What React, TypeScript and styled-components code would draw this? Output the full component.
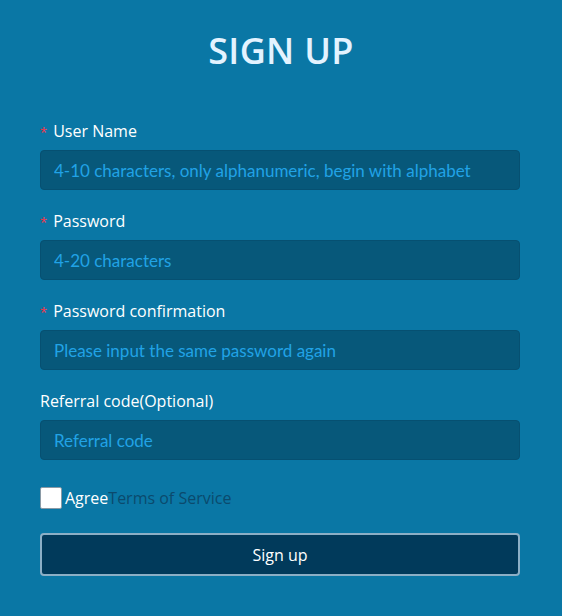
import React from "react";
import styled, { createGlobalStyle } from "styled-components";

const Global = createGlobalStyle`
  html, body { margin: 0; padding: 0; background: #0a77a5; }
  body { font-family: "Open Sans", "Noto Sans", sans-serif; }
  * { box-sizing: border-box; }
`;

const Page = styled.div`
  width: 562px;
  min-height: 616px;
  background: #0a77a5;
  padding: 28px 40px 0 40px;
`;

const Title = styled.h1`
  margin: 0 0 47px;
  text-align: center;
  font-family: "Open Sans", sans-serif;
  font-weight: 600;
  font-size: 36px;
  line-height: 46px;
  color: #e3f3ff;
  letter-spacing: 0.3px;
`;

const Form = styled.form`
  display: flex;
  flex-direction: column;
`;

const Field = styled.div`
  display: flex;
  flex-direction: column;
  gap: 7px;
  margin-bottom: 21px;
`;

const Label = styled.label`
  font-family: "Open Sans", sans-serif;
  font-size: 16px;
  line-height: 21px;
  height: 22px;
  color: #ffffff;
  display: flex;
  align-items: baseline;
`;

const Required = styled.span`
  color: #ff3346;
  font-size: 13px;
  margin-right: 6px;
`;

const Input = styled.input`
  width: 480px;
  height: 40px;
  border: 1px solid #065071;
  border-radius: 4px;
  background: #07587a;
  padding: 0 13px;
  font-family: Lato, sans-serif;
  font-size: 17px;
  color: #ffffff;
  outline: none;
  &::placeholder {
    color: #21a3e6;
  }
`;

const Agree = styled.label`
  display: flex;
  align-items: center;
  font-family: "Open Sans", sans-serif;
  font-size: 16px;
  color: #ffffff;
  margin-top: 6px;
`;

const Box = styled.span`
  width: 22px;
  height: 22px;
  background: #ffffff;
  border: 1px solid #8a9aa6;
  border-radius: 2px;
  margin-right: 3px;
`;

const Terms = styled.a`
  color: #0b4a6d;
  text-decoration: none;
`;

const Submit = styled.button`
  margin-top: 24px;
  width: 480px;
  height: 43px;
  background: #013a5b;
  border: 2px solid #8cafc6;
  border-radius: 4px;
  color: #ffffff;
  font-family: "Open Sans", sans-serif;
  font-size: 16px;
`;

const fields = [
  { label: "User Name", req: true, ph: "4-10 characters, only alphanumeric, begin with alphabet", type: "text" },
  { label: "Password", req: true, ph: "4-20 characters", type: "password" },
  { label: "Password confirmation", req: true, ph: "Please input the same password again", type: "password" },
  { label: "Referral code(Optional)", req: false, ph: "Referral code", type: "text" },
];

export default function App() {
  return (
    <Page>
      <Global />
      <Title>SIGN UP</Title>
      <Form onSubmit={(e) => e.preventDefault()}>
        {fields.map((f) => (
          <Field key={f.label}>
            <Label>
              {f.req && <Required>*</Required>}
              {f.label}
            </Label>
            <Input type={f.type} placeholder={f.ph} />
          </Field>
        ))}
        <Agree>
          <Box />
          Agree<Terms href="#">Terms of Service</Terms>
        </Agree>
        <Submit type="submit">Sign up</Submit>
      </Form>
    </Page>
  );
}
